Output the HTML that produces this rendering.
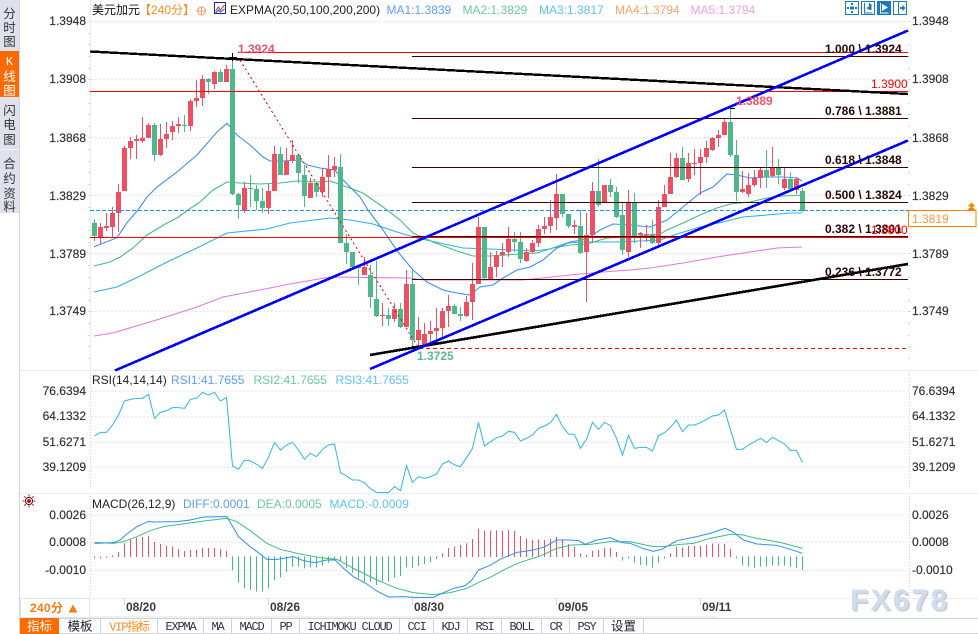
<!DOCTYPE html>
<html lang="zh"><head><meta charset="utf-8"><title>美元加元</title>
<style>
html,body{margin:0;padding:0;background:#fff;width:978px;height:634px;overflow:hidden}
svg{display:block}
text{font-family:"Liberation Sans","Noto Sans CJK SC",sans-serif;font-size:12px;fill:#333}
.ax{fill:#2e2e2e;stroke:#2e2e2e;stroke-width:.15px}
.end{text-anchor:end}
.mid{text-anchor:middle}
.fib{font-weight:bold;fill:#2a0505}
.tab{font-family:"Liberation Mono","Noto Sans CJK SC",monospace;font-size:12px;letter-spacing:-1.2px;text-anchor:middle;fill:#333}
.cn{font-family:"Liberation Sans","Noto Sans CJK SC",sans-serif;font-size:12.5px;letter-spacing:0;text-anchor:middle;fill:#222}
.date{font-weight:bold;fill:#3a3a3a}
.lg{stroke-width:.15px}
</style></head><body>
<svg width="978" height="634" viewBox="0 0 978 634" xmlns="http://www.w3.org/2000/svg">
<rect width="978" height="634" fill="#fff"/>

<!-- sidebar -->
<rect x="0" y="0" width="19" height="213" fill="#dfe2ec"/>
<rect x="0" y="51" width="19" height="46" fill="#ff6a00"/>
<rect x="0" y="149" width="19" height="1" fill="#f0f2f6"/>
<rect x="19" y="0" width="1" height="634" fill="#d0d6e0"/>
<g>
<text x="9.5" y="18" class="mid" style="font-size:12.5px">分</text><text x="9.5" y="32" class="mid" style="font-size:12.5px">时</text><text x="9.5" y="46" class="mid" style="font-size:12.5px">图</text>
<text x="9.5" y="65" class="mid" style="fill:#fff;font-family:'Liberation Mono',monospace">K</text><text x="9.5" y="81" class="mid" style="fill:#fff;font-size:12.5px">线</text><text x="9.5" y="95" class="mid" style="fill:#fff;font-size:12.5px">图</text>
<text x="9.5" y="115" class="mid" style="font-size:12.5px">闪</text><text x="9.5" y="129" class="mid" style="font-size:12.5px">电</text><text x="9.5" y="144" class="mid" style="font-size:12.5px">图</text>
<text x="9.5" y="168" class="mid" style="font-size:12.5px">合</text><text x="9.5" y="183" class="mid" style="font-size:12.5px">约</text><text x="9.5" y="198" class="mid" style="font-size:12.5px">资</text><text x="9.5" y="211" class="mid" style="font-size:12.5px">料</text>
</g>

<!-- separators -->
<g fill="#e8eef4">
<rect x="20" y="370" width="958" height="1"/>
<rect x="20" y="493" width="958" height="1"/>
<rect x="20" y="598" width="958" height="1"/>
<rect x="90" y="0" width="1" height="370" fill="#e4ecf4"/>
</g>
<rect x="90" y="616" width="627" height="2" fill="#eef0f3"/>

<!-- grid -->
<g stroke="#e6e6e6" stroke-width="1" stroke-dasharray="2 2" shape-rendering="crispEdges">
<path d="M91 21.5H908M91 79.5H908M91 137.5H908M91 195.5H908M91 253.5H908M91 311.5H908"/>
<path d="M91 391.5H908M91 416.5H908M91 442.5H908M91 467.5H908"/>
<path d="M91 515.5H908M91 542.5H908M91 570.5H908"/>
</g>
<g stroke="#cfd6dc" stroke-width="1" stroke-dasharray="1 2" shape-rendering="crispEdges">
<path d="M90.5 372V490M90.5 496V597M909.5 372V490M909.5 496V597"/>
</g>
<g stroke="#d4d9df" stroke-width="1" shape-rendering="crispEdges">
<path d="M88 21.5h2M88 33.5h2M88 44.5h2M88 56.5h2M88 68.5h2M88 79.5h2M88 91.5h2M88 103.5h2M88 114.5h2M88 126.5h2M88 137.5h2M88 149.5h2M88 161.5h2M88 172.5h2M88 184.5h2M88 195.5h2M88 207.5h2M88 219.5h2M88 230.5h2M88 242.5h2M88 253.5h2M88 265.5h2M88 277.5h2M88 288.5h2M88 300.5h2M88 311.5h2M88 323.5h2M88 335.5h2M88 346.5h2M88 358.5h2"/>
<path d="M908 21.5h3M908 33.5h2M908 44.5h2M908 56.5h2M908 68.5h2M908 79.5h3M908 91.5h2M908 103.5h2M908 114.5h2M908 126.5h2M908 137.5h3M908 149.5h2M908 161.5h2M908 172.5h2M908 184.5h2M908 195.5h3M908 253.5h3M908 265.5h2M908 277.5h2M908 288.5h2M908 300.5h2M908 311.5h3M908 323.5h2M908 335.5h2M908 346.5h2M908 358.5h2"/>
<path d="M124.5 598v7M268.5 598v7M412.5 598v7M556.5 598v7M700.5 598v7"/>
</g>

<!-- EXPMA lines -->
<g fill="none" stroke-width="1.1">
<polyline stroke="#e07ada" points="94,336 113,333 133,327 163,318 197,307 223,297 260,290 290,284 330,277 410,278 423,280 523,280 543,278 570,275 603,272 630,270 650,268 683,263 717,257 750,252 777,248 802,247"/>
<polyline stroke="#2fb0e8" points="94,292 117,287 140,276 167,262 197,248 227,233 267,229 290,223 330,218 350,220 373,224 397,232 417,238 440,243 463,248 490,249 513,250 533,251 550,249 567,243 583,242 613,242 640,241 660,240 677,234 700,227 723,222 743,217 767,215 790,213 802,213"/>
<polyline stroke="#42bd82" points="94,266 110,262 120,257 133,248 147,235 167,223 177,218 188,210 200,202 213,190 227,182 240,183 260,184 280,183 297,181 320,182 330,181 347,187 363,193 383,207 400,220 413,233 433,242 457,251 473,256 490,256 520,254 537,253 553,248 570,245 587,244 607,238 630,237 660,234 667,230 683,223 700,215 717,208 730,204 750,202 767,198 783,196 802,195"/>
<polyline stroke="#3a8ff5" points="94,246.7 117,237.7 127,222.7 138,210 147,197 157,187 177,172 197,155 217,132 227,123.3 237,135 250,145 263,157 270,161 283,161 300,160 307,165 320,168 335,170 343,180 360,197 368,210 383,230 398,252 413,270 427,282 443,290 457,293 470,295 480,287 493,285 503,278 517,270 530,267 543,260 557,248 570,242 587,239 600,230 613,224 630,225 650,227 667,220 683,207 700,193 713,187 727,174 737,175 750,178 763,177 783,177 797,178 802,181"/>
</g>

<!-- candles -->
<g fill="none" shape-rendering="crispEdges">
<path stroke="#ee4f62" stroke-width="1" d="M100.5 223V244M106.5 213V231M112.5 207V237M118.5 184V232M124.5 146V191M130.5 137V159M136.5 135V159M142.5 117V143M148.5 123V138M160.5 124V156M166.5 122V148M172.5 121V140M178.5 117V133M190.5 99V131M196.5 80V107M202.5 75V106M214.5 71V89M226.5 65V82M244.5 182V213M268.5 184V214M274.5 146V191M286.5 148V175M292.5 140V163M310.5 178V198M322.5 168V197M328.5 155V198M334.5 157V177M364.5 257V275M382.5 303V326M394.5 303V322M406.5 270V327M418.5 317V347M424.5 323V347M430.5 321V343M436.5 308V343M442.5 308V337M448.5 295V327M466.5 296V317M472.5 263V320M478.5 217V284M490.5 252V280M496.5 251V277M502.5 243V267M508.5 227V257M526.5 248V262M532.5 240V253M538.5 225V247M544.5 217V234M550.5 200V233M556.5 174V230M574.5 220V234M586.5 213V302M592.5 182V243M604.5 185V202M628.5 190V257M640.5 232V248M646.5 225V242M658.5 200V245M664.5 185V207M670.5 153V194M676.5 153V178M688.5 153V182M694.5 149V175M700.5 149V195M706.5 141V163M712.5 137V151M718.5 130V147M724.5 119V135M742.5 171V193M748.5 173V197M754.5 170V187M760.5 168V188M772.5 147V177M784.5 168V190M796.5 177V194"/>
<path stroke="#ee4f62" stroke-width="5" d="M100.5 227V238M106.5 226V228M112.5 213V227M118.5 192V213M124.5 148V191M130.5 141V148M136.5 139V141M142.5 138V141M148.5 125V138M160.5 139V155M166.5 134V139M172.5 126V132M178.5 124V126M190.5 101V126M196.5 98V101M202.5 79V98M214.5 72V84M226.5 69V82M244.5 188V211M268.5 191V208M274.5 154V191M286.5 161V175M292.5 155V161M310.5 183V198M322.5 177V192M328.5 169V177M334.5 166V170M364.5 267V275M382.5 315V316M394.5 309V319M406.5 284V327M418.5 330V340M424.5 334V346M430.5 331V334M436.5 328V331M442.5 311V328M448.5 306V311M466.5 302V316M472.5 284V302M478.5 227V284M490.5 267V279M496.5 255V267M502.5 252V255M508.5 239V252M526.5 252V261M532.5 243V252M538.5 229V243M544.5 226V229M550.5 217V226M556.5 194V218M574.5 225V227M586.5 235V252M592.5 191V235M604.5 185V202M628.5 202V252M640.5 233V235M646.5 234V235M658.5 207V243M664.5 194V207M670.5 177V194M676.5 158V177M688.5 163V179M694.5 163V164M700.5 157V163M706.5 148V157M712.5 138V150M718.5 135V138M724.5 122V135M742.5 189V192M748.5 185V194M754.5 178V185M760.5 170V178M772.5 168V176M784.5 179V188M796.5 179V190"/>
<path stroke="#4fb88a" stroke-width="1" d="M94.5 219V241M154.5 123V161M184.5 115V132M208.5 78V94M220.5 69V82M232.5 57V195M238.5 193V219M250.5 175V207M256.5 185V210M262.5 188V213M280.5 147V175M298.5 154V183M304.5 165V207M316.5 182V197M340.5 154V243M346.5 234V264M352.5 252V270M358.5 265V285M370.5 265V308M376.5 261V317M388.5 308V326M400.5 303V328M412.5 270V347M454.5 304V314M460.5 307V321M484.5 227V280M514.5 232V252M520.5 232V263M562.5 194V217M568.5 214V228M580.5 210V254M598.5 159V207M610.5 179V197M616.5 187V218M622.5 203V255M634.5 193V243M652.5 220V244M682.5 147V180M730.5 108V157M736.5 140V201M766.5 150V188M778.5 159V184M790.5 172V191M802.5 188V212"/>
<path stroke="#4fb88a" stroke-width="5" d="M94.5 223V236M154.5 125V155M184.5 125V126M208.5 79V82M220.5 72V82M232.5 69V194M238.5 194V205M250.5 188V189M256.5 189V201M262.5 201V208M280.5 154V175M298.5 155V173M304.5 175V196M316.5 183V192M340.5 167V243M346.5 243V252M352.5 252V267M358.5 267V268M370.5 275V297M376.5 299V316M388.5 315V319M400.5 309V327M412.5 284V340M454.5 306V314M460.5 314V316M484.5 227V278M514.5 239V242M520.5 242V259M562.5 194V214M568.5 214V226M580.5 226V253M598.5 191V205M610.5 185V192M616.5 192V217M622.5 215V250M634.5 202V236M652.5 234V243M682.5 158V180M730.5 122V155M736.5 155V192M766.5 170V177M778.5 168V175M790.5 179V189M802.5 191V211"/>
</g>

<!-- drawn lines -->
<g fill="none" shape-rendering="crispEdges">
<path stroke="#f00" stroke-width="1" d="M238 52.5H908M90 91.5H908M90 237.5H908"/>
<path stroke="#3a0000" stroke-width="1" d="M412 56.5H908M412 118.5H908M412 167.5H908M412 202.5H908M412 236.5H908M412 279.5H908"/>
<path stroke="#1e90ff" stroke-width="1" stroke-dasharray="4 2" d="M90 210.5H908"/>
<path stroke="#f00" stroke-width="1" stroke-dasharray="4 3" d="M412 348.5H908"/>
<path stroke="#f00" stroke-width="1" stroke-dasharray="2 3" d="M240 60L418 347"/>
<path stroke="#000" stroke-width="2.4" d="M90 51.5L908 94"/>
<path stroke="#000" stroke-width="2.6" d="M370 355L908 264"/>
<path stroke="#00f" stroke-width="2.6" d="M115 370.5L908 30.5"/>
<path stroke="#00f" stroke-width="2.6" d="M370 369L908 140.5"/>
<path stroke="#000" stroke-width="1" d="M229 57.5h8M232.5 53v8M730 108.5h5M412 346.5h5"/>
</g>

<!-- RSI -->
<g transform="translate(.17,370) scale(.33333)" fill="none">
<polyline stroke="#2fb5ea" stroke-width="3" points="283,198 301,187 319,187 337,165 355,135 373,93 391,88 409,85 427,85 445,73 463,145 481,127 499,122 517,113 535,113 553,115 571,88 589,85 607,67 625,75 643,67 661,93 679,82 697,288 715,298 733,270 751,273 769,283 787,295 805,262 823,217 841,240 859,225 877,217 895,240 913,268 931,250 949,260 967,238 985,225 1003,222 1021,308 1039,318 1057,330 1075,330 1093,338 1111,357 1129,367 1147,368 1165,368 1183,350 1201,362 1219,287 1237,337 1255,320 1273,325 1291,320 1309,312 1327,282 1345,273 1363,285 1381,290 1399,263 1417,235 1435,157 1453,228 1471,215 1489,203 1507,198 1525,184 1543,187 1561,213 1579,205 1597,195 1615,175 1633,168 1651,158 1669,133 1687,170 1705,192 1723,193 1741,235 1759,208 1777,157 1795,178 1813,157 1831,167 1849,205 1867,255 1885,196 1903,235 1921,232 1939,232 1957,243 1975,197 1993,188 2011,172 2029,150 2047,185 2065,165 2083,165 2101,158 2119,148 2137,138 2155,135 2173,120 2191,180 2209,238 2227,238 2245,225 2263,215 2281,205 2299,217 2317,202 2335,212 2353,222 2371,241 2389,241 2407,278"/>
</g>

<!-- MACD -->
<g transform="translate(.17,490) scale(.33333)" fill="none" stroke-width="3">
<path stroke="#ee4f62" d="M337 201V196M355 201V186M373 201V160M391 201V147M409 201V144M427 201V141M445 201V137M463 201V156M481 201V162M499 201V168M517 201V170M535 201V177M553 201V183M571 201V180M589 201V180M607 201V174M625 201V174M643 201V174M661 201V177M679 201V183M1327 201V190M1345 201V174M1363 201V170M1381 201V165M1399 201V160M1417 201V147M1435 201V117M1453 201V122M1471 201V122M1489 201V121M1507 201V122M1525 201V120M1543 201V123M1561 201V138M1579 201V146M1597 201V150M1615 201V148M1633 201V150M1651 201V147M1669 201V141M1687 201V148M1705 201V162M1723 201V170M1741 201V190M1759 201V195M1777 201V182M1795 201V180M1813 201V174M1831 201V174M1849 201V186M2011 201V190M2029 201V170M2047 201V172M2065 201V168M2083 201V168M2101 201V167M2119 201V164M2137 201V161M2155 201V161M2173 201V162M2191 201V177"/>
<path stroke="#3dbd85" d="M283 199V206M301 199V205M319 199V204M697 199V240M715 199V278M733 199V295M751 199V300M769 199V305M787 199V305M805 199V295M823 199V270M841 199V262M859 199V246M877 199V230M895 199V230M913 199V235M931 199V232M949 199V232M967 199V226M985 199V218M1003 199V212M1021 199V215M1039 199V235M1057 199V248M1075 199V265M1093 199V277M1111 199V275M1129 199V285M1147 199V275M1165 199V275M1183 199V263M1201 199V258M1219 199V232M1237 199V234M1255 199V228M1273 199V222M1291 199V216M1309 199V207M1867 199V212M1885 199V205M1903 199V218M1921 199V225M1939 199V227M1957 199V233M1975 199V218M1993 199V205M2209 199V205M2227 199V226M2245 199V230M2263 199V233M2281 199V230M2299 199V230M2317 199V227M2335 199V227M2353 199V227M2371 199V230M2389 199V234M2407 199V240"/>
<polyline stroke="#3dbd85" points="283,157 340,160 370,155 410,140 450,122 490,110 560,100 620,92 680,85 710,95 750,122 800,160 840,178 900,192 960,203 1010,208 1060,235 1130,270 1190,295 1240,308 1300,314 1350,308 1400,295 1440,275 1470,262 1520,235 1560,217 1620,198 1670,175 1715,165 1770,163 1830,155 1890,155 1960,170 1990,170 2040,163 2080,160 2130,145 2190,133 2220,133 2270,145 2340,157 2407,175"/>
<polyline stroke="#2f8ff0" points="283,160 340,158 360,150 380,132 410,110 445,94 460,96 530,95 570,90 610,81 680,80 695,105 715,140 750,170 775,188 800,208 830,208 880,200 910,212 945,218 980,210 1005,210 1030,235 1060,260 1100,282 1130,303 1165,321 1210,320 1240,322 1300,322 1330,308 1360,295 1395,287 1415,270 1435,240 1470,226 1500,208 1550,187 1590,182 1630,172 1670,150 1705,150 1735,152 1755,163 1790,150 1830,143 1865,158 1890,160 1930,176 1960,184 1985,178 2030,152 2090,140 2130,130 2175,115 2200,127 2230,150 2270,162 2330,166 2370,178 2407,190"/>
</g>

<!-- axis labels -->
<g>
<text x="86" y="25" class="ax end">1.3948</text><text x="86" y="83" class="ax end">1.3908</text><text x="86" y="142" class="ax end">1.3868</text><text x="86" y="200" class="ax end">1.3829</text><text x="86" y="258" class="ax end">1.3789</text><text x="86" y="315" class="ax end">1.3749</text>
<text x="86" y="395" class="ax end">76.6394</text><text x="86" y="420" class="ax end">64.1332</text><text x="86" y="446" class="ax end">51.6271</text><text x="86" y="471" class="ax end">39.1209</text>
<text x="86" y="519" class="ax end">0.0026</text><text x="86" y="546" class="ax end">0.0008</text><text x="86" y="574" class="ax end">-0.0010</text>
<text x="912" y="25" class="ax">1.3948</text><text x="912" y="83" class="ax">1.3908</text><text x="912" y="142" class="ax">1.3868</text><text x="912" y="200" class="ax">1.3829</text><text x="912" y="258" class="ax">1.3789</text><text x="912" y="315" class="ax">1.3749</text>
<text x="912" y="395" class="ax">76.6394</text><text x="912" y="420" class="ax">64.1332</text><text x="912" y="446" class="ax">51.6271</text><text x="912" y="471" class="ax">39.1209</text>
<text x="912" y="519" class="ax">0.0026</text><text x="912" y="546" class="ax">0.0008</text><text x="912" y="574" class="ax">-0.0010</text>
</g>

<!-- price tag -->
<rect x="908.5" y="210.5" width="67.5" height="16" fill="#fff" stroke="#ff8000"/>
<text x="912" y="223" style="fill:#ff9a3c;font-size:12px">1.3819</text>
<path d="M971.5 202.5l4 4h-8zM971.5 206l4 4h-8z" fill="#ff8000"/>

<!-- fib labels -->
<text x="825" y="53" class="fib">1.000 \ 1.3924</text>
<text x="825" y="115" class="fib">0.786 \ 1.3881</text>
<text x="825" y="164" class="fib">0.618 \ 1.3848</text>
<text x="825" y="199" class="fib">0.500 \ 1.3824</text>
<text x="825" y="233" class="fib">0.382 \ 1.3801</text>
<text x="825" y="276" class="fib">0.236 \ 1.3772</text>
<text x="871" y="88" style="fill:#f00">1.3900</text>
<text x="871" y="234" style="fill:#f00">1.3800</text>
<text x="238" y="53" style="fill:#f0516a;font-weight:bold">1.3924</text>
<text x="736" y="105" style="fill:#f0516a;font-weight:bold">1.3889</text>
<text x="417" y="360" style="fill:#5cb98e;font-weight:bold">1.3725</text>

<!-- header -->
<text x="92" y="14" style="fill:#111">美元加元</text>
<text x="139" y="14" style="fill:#ff8a1a">【240分】</text>
<circle cx="201.5" cy="11" r="4" fill="none" stroke="#f59a5a"/><path d="M197 11h9M201.5 7v8" stroke="#f59a5a"/>
<rect x="214.5" y="2.5" width="11" height="11" fill="#fff" stroke="#1b2a8c"/>
<path d="M215.5 11l3-4 2 3 4-5" fill="none" stroke="#e03030"/><path d="M215.5 13l3-3 2 2 4-3" fill="none" stroke="#2050d0"/>
<text x="230" y="14" style="fill:#222">EXPMA(20,50,100,200,200)</text>
<text x="386.5" y="14" style="fill:#5a9dfa">MA1:1.3839</text>
<text x="462.5" y="14" style="fill:#66cc99">MA2:1.3829</text>
<text x="539" y="14" style="fill:#5fc2f2">MA3:1.3817</text>
<text x="615" y="14" style="fill:#ffa468">MA4:1.3794</text>
<text x="690.5" y="14" style="fill:#e8a2e4">MA5:1.3794</text>

<text x="92" y="384" style="fill:#222">RSI(14,14,14)</text>
<text x="171" y="384" style="fill:#5a9dfa">RSI1:41.7655</text>
<text x="253.5" y="384" style="fill:#66cc99">RSI2:41.7655</text>
<text x="335.5" y="384" style="fill:#5fc2f2">RSI3:41.7655</text>

<text x="92" y="508" style="fill:#222">MACD(26,12,9)</text>
<text x="183" y="508" style="fill:#5a9dfa">DIFF:0.0001</text>
<text x="257" y="508" style="fill:#66cc99">DEA:0.0005</text>
<text x="329.5" y="508" style="fill:#5fc2f2">MACD:-0.0009</text>

<!-- top-right icons -->
<g>
<rect x="845.5" y="1.5" width="13" height="13" fill="#fff" stroke="#1a7bc4"/>
<path d="M850 6.5h4v3h-4zM851 3h2v2h-2zM851 11h2v2h-2zM847 7h2v2h-2zM855 7h2v2h-2z" fill="#1a7bc4"/>
<rect x="861.5" y="1.5" width="13" height="13" fill="#fff" stroke="#1a7bc4"/>
<path d="M864.5 3v10h8M869.5 3v7" fill="none" stroke="#1a7bc4"/><path d="M869 6.5l-3 1.5 3 1.5zM870 4h1.5v6H870z" fill="#1a7bc4"/>
<rect x="877" y="1" width="14" height="14" fill="#1a7bc4"/>
<path d="M880.5 3v10h8" fill="none" stroke="#fff"/><path d="M882 4v7l6-3.500z" fill="#fff"/>
<rect x="893.500" y="1.500" width="13" height="13" fill="#fff" stroke="#1a7bc4"/>
<path d="M898.5 1.500v13" stroke="#1a7bc4"/><path d="M900 7h2.500V4.500l3 3.500-3 3.500V9H900z" fill="#1a7bc4"/>
</g>

<!-- sun icon -->
<circle cx="29" cy="501" r="2" fill="#e00"/>
<circle cx="29" cy="501" r="3.600" fill="none" stroke="#222" stroke-width="1"/>
<path d="M29 494.500v2M29 505.500v2M22.500 501h2M33.500 501h2M24.300 496.300l1.500 1.500M32.200 504.200l1.500 1.500M33.700 496.300l-1.500 1.500M25.800 504.200l-1.500 1.500" stroke="#e00" fill="none"/>

<!-- date labels -->
<text x="126" y="611" class="date">08/20</text>
<text x="270" y="611" class="date">08/26</text>
<text x="414" y="611" class="date">08/30</text>
<text x="558" y="611" class="date">09/05</text>
<text x="702" y="611" class="date">09/11</text>

<!-- period box -->
<rect x="20.500" y="598.500" width="69" height="19" fill="#fff" stroke="#dfe5ea"/>
<text x="30" y="612" style="fill:#ff7a10;font-weight:bold;letter-spacing:.3px">240分</text>
<path d="M68.500 612.500l4.500-8 4.500 8z" fill="#ff7a10"/>

<!-- watermark -->
<text x="851.5" y="611.5" style="font-size:30px;font-weight:bold;letter-spacing:2.2px;fill:#c9cdd2">FX678</text>
<text x="850" y="610" style="font-size:30px;font-weight:bold;letter-spacing:2.2px;fill:#cfdded">FX678</text>

<!-- tabs -->
<rect x="20" y="618" width="958" height="1" fill="#c8d4e0"/>
<rect x="20" y="633" width="958" height="1" fill="#c8d4e0"/>
<rect x="20" y="618" width="39" height="16" fill="#ff6a00"/>
<path d="M100.500 618v16M157.500 618v16M203.500 618v16M231.500 618v16M271.500 618v16M299.500 618v16M399.500 618v16M433.500 618v16M467.500 618v16M501.500 618v16M541.500 618v16M569.500 618v16M603.500 618v16M643.500 618v16" stroke="#c8d4e0" fill="none"/>
<text x="39.500" y="630.500" class="cn" style="fill:#fff">指标</text>
<text x="80" y="630.500" class="cn">模板</text>
<text x="129" y="630.500" class="tab" style="fill:#ff8a1a">VIP指标</text>
<text x="180.500" y="630" class="tab">EXPMA</text>
<text x="217.500" y="630" class="tab">MA</text>
<text x="251.500" y="630" class="tab">MACD</text>
<text x="285.500" y="630" class="tab">PP</text>
<text x="349.500" y="630" class="tab">ICHIMOKU CLOUD</text>
<text x="416.500" y="630" class="tab">CCI</text>
<text x="450.500" y="630" class="tab">KDJ</text>
<text x="484.500" y="630" class="tab">RSI</text>
<text x="521.500" y="630" class="tab">BOLL</text>
<text x="555.500" y="630" class="tab">CR</text>
<text x="586.500" y="630" class="tab">PSY</text>
<text x="623.500" y="630.500" class="cn">设置</text>
</svg>
</body></html>
